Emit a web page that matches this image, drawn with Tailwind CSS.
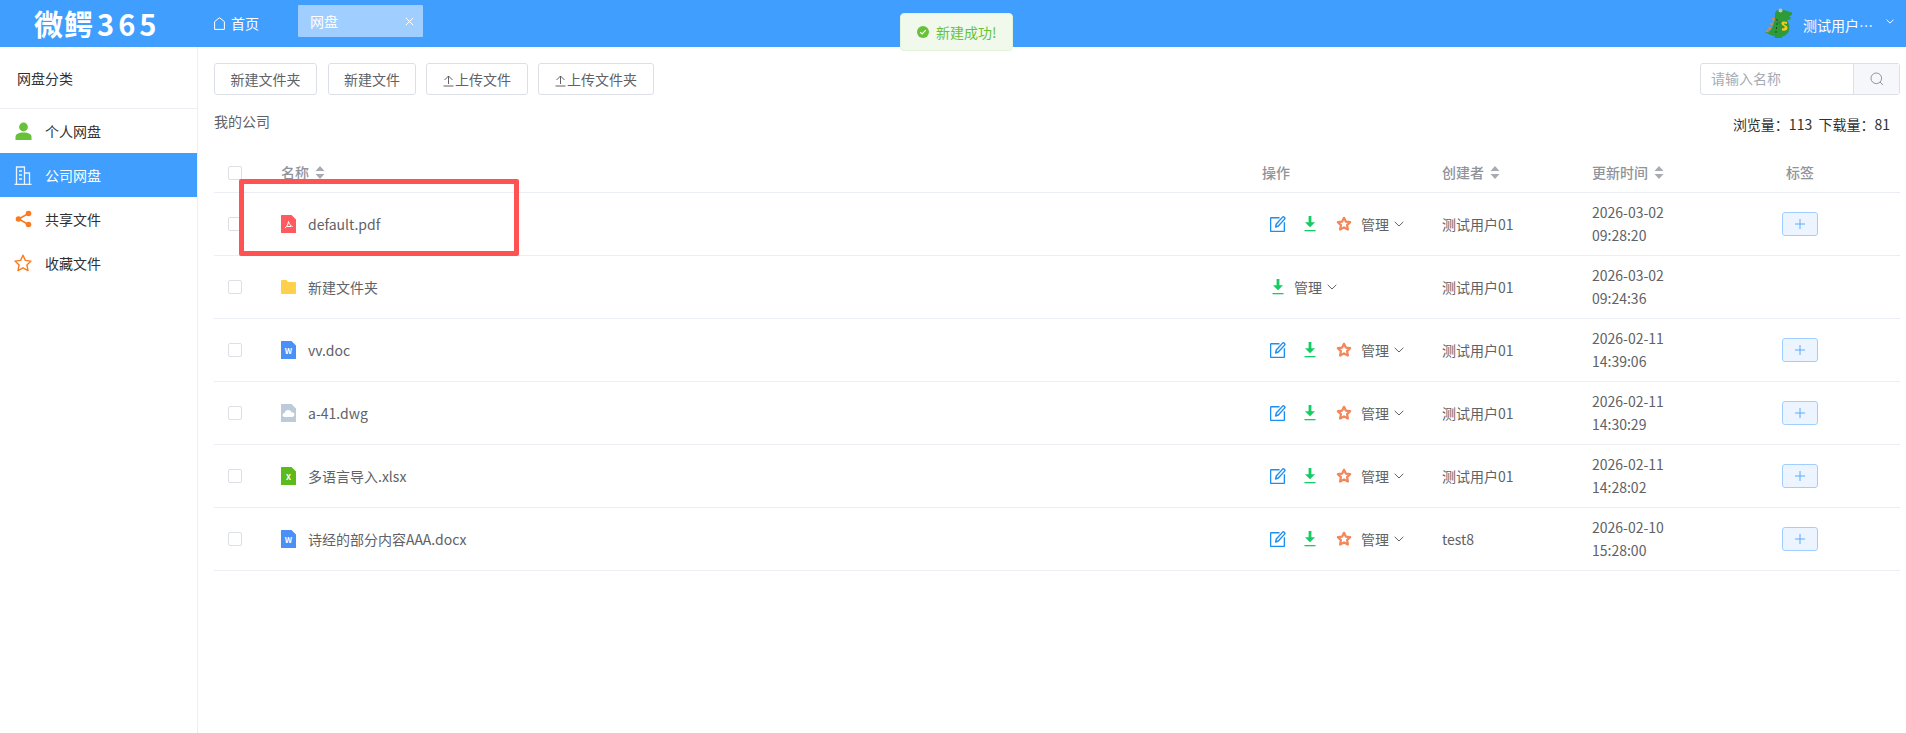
<!DOCTYPE html>
<html lang="zh-CN">
<head>
	<meta charset="UTF-8">
	<meta name="viewport" content="width=device-width, initial-scale=1.0">
	<script src="https://cdn.jsdelivr.net/npm/@tailwindcss/browser@4"></script>
	<title>网盘</title>
</head>
<body class="relative h-[733px] overflow-hidden bg-white font-['Noto_Sans_CJK_SC','Noto_Sans',sans-serif] text-[14px] text-[#606266]">
	<!-- shared icons -->
	<svg class="hidden">
		<symbol id="i-edit" viewBox="0 0 16 16">
			<path d="M9.500 1.700H1.200a.6.6 0 0 0-.6.6v12.500c0 .3.3.6.6.6h12.600c.3 0 .6-.3.6-.6V6.200" fill="none" stroke="#1d8ff0" stroke-width="1.400"/>
			<path d="M5.600 11 6.300 8 12.600 1.100a1 1 0 0 1 1.400 0l.6.6a1 1 0 0 1 0 1.400L8.300 10z" fill="none" stroke="#1d8ff0" stroke-width="1.400" stroke-linejoin="round"/>
		</symbol>
		<symbol id="i-down" viewBox="0 0 12 16">
			<path d="M4.600 0h2.800v6.200H11L6 11.200 1 6.200h3.600z" fill="#14cc63"/>
			<rect x="0.500" y="14" width="11" height="1.300" fill="#14cc63"/>
		</symbol>
		<symbol id="i-star" viewBox="0 0 14 14">
			<path d="M7 1.600 8.600 4.900 12.400 5.400 9.700 8 10.400 11.800 7 10 3.600 11.800 4.300 8 1.600 5.400 5.400 4.900z" fill="none" stroke="#f2875c" stroke-width="2" stroke-linejoin="round"/>
		</symbol>
		<symbol id="i-chev" viewBox="0 0 10 6">
			<path d="M.7.8 5 5 9.300.8" fill="none" stroke="#606266" stroke-width="1"/>
		</symbol>
		<symbol id="i-sort" viewBox="0 0 10 13">
			<path d="M5 0 9.500 5H.5zM5 13 .5 8h9z" fill="#a8abb2"/>
		</symbol>
		<symbol id="i-file" viewBox="0 0 15 18">
			<path d="M0 .5A.5.5 0 0 1 .5 0h10L15 4.500v13a.5.5 0 0 1-.5.5H.5a.5.5 0 0 1-.5-.5z"/>
		</symbol>
	</svg>

	<header class="flex h-[47px] bg-[#409eff] text-white">
		<div class="w-[214px] shrink-0 pl-[34px] text-[29px] leading-[47px] font-bold tracking-[1px]">微鳄<span class="ml-[3px] tracking-[4px]">365</span></div>
		<div class="flex items-center h-[47px] w-[84px] shrink-0 gap-[6px] pb-[1px] text-[14px]">
			<svg class="w-[11px] h-[13px]" viewBox="0 0 11 13"><path d="M.6 4.600 5.500.7l4.900 3.900v7.800H.6z" fill="none" stroke="#fff" stroke-width="1"/></svg>
			<span>首页</span>
		</div>
		<div class="flex items-center justify-between mt-[5px] h-[32px] w-[125px] shrink-0 pl-[12px] pr-[9px] rounded-[1px] bg-[#a0cfff] text-[14px]">
			<span>网盘</span>
			<svg class="w-[9px] h-[9px]" viewBox="0 0 9 9"><path d="M.8.8l7.400 7.400M8.200.8.8 8.200" stroke="#fff" stroke-width="1"/></svg>
		</div>
		<div class="flex items-center ml-auto h-[47px]">
			<svg class="w-[28px] h-[32px] mb-[1px]" viewBox="0 0 28 32">
				<path d="M10 7C10 3 15 1 19 3L27 5.500C28 7 26 9 24 9.500L26 11C25 13 23 13 22 13C25 17 25 24 22 27C20 29 18 30 15 30H17V31H9L10 29C7 29 3 27 0 25C4 25 6 24 7 21C9 17 10 12 10 7Z" fill="#2e9b3a"/>
				<path d="M19 14.500C16.500 14 15.500 17 18 18.500C20 19.500 20.500 21 18 21.500L17 21V23.500C20 24.500 23 23 22.500 20.500C22 18 18.500 18 19 16.500L22 17V15z" fill="#f4c81e"/>
				<path d="M10 11 6.500 11.500 9 15zM8 15.500 4.500 16.500 7.500 19.500zM6.500 20 2.500 20.500 5 23.500zM3.500 23 .5 24 3.500 26z" fill="#ef8a1c"/>
				<circle cx="15.500" cy="3.500" r="2" fill="#b9c9c2"/>
				<path d="M12 12v2M12 16v2M11.500 20v2M11 24v2M14 15v1" stroke="#1f4a25" stroke-width="1"/>
			</svg>
			<span class="ml-[10px] w-[71px] truncate text-[14px] leading-[20px] mb-[-3px]">测试用户01</span>
			<svg class="ml-[12px] mr-[12px] mb-[5px] w-[8px] h-[5px]" viewBox="0 0 10 6"><path d="M.7.8 5 5 9.300.8" fill="none" stroke="#fff" stroke-width="1.200"/></svg>
		</div>
	</header>

	<div class="flex h-[686px]">
		<aside class="w-[198px] shrink-0 border-r border-[#ebeef5]">
			<div class="h-[62px] border-b border-[#ebeef5] pl-[17px] leading-[63px] text-[#303133]">网盘分类</div>
			<nav class="text-[#303133]">
				<a class="flex items-center h-[44px] pl-[15px] gap-[13px]">
					<svg class="w-[17px] h-[18px]" viewBox="0 0 17 18"><circle cx="8.500" cy="5" r="4.400" fill="#67c23a"/><path d="M.5 18v-3c0-3 3-4.500 8-4.500s8 1.500 8 4.500v3z" fill="#67c23a"/></svg>
					<span>个人网盘</span>
				</a>
				<a class="flex items-center h-[44px] pl-[14px] gap-[13px] bg-[#409eff] text-white">
					<svg class="w-[18px] h-[19px]" viewBox="0 0 18 19" fill="none" stroke="#eaf4ff" stroke-width="1.300"><path d="M.5 18.300h17M2.500 18.300V1h8v17.300M10.500 7h5v11.300M5 5h3M5 9h3M5 13h3"/></svg>
					<span>公司网盘</span>
				</a>
				<a class="flex items-center h-[44px] pl-[15px] gap-[13px]">
					<svg class="w-[17px] h-[18px]" viewBox="0 0 17 18"><path d="M13.500 3.500 3.500 9l10 5.500" fill="none" stroke="#f97a1f" stroke-width="1.500"/><circle cx="13.500" cy="3.500" r="2.800" fill="#f97a1f"/><circle cx="3.500" cy="9" r="2.800" fill="#f97a1f"/><circle cx="13.500" cy="14.500" r="2.800" fill="#f97a1f"/></svg>
					<span>共享文件</span>
				</a>
				<a class="flex items-center h-[44px] pl-[14px] gap-[13px]">
					<svg class="w-[18px] h-[18px]" viewBox="0 0 18 18"><path d="M9 1.200 11.400 6.400 17 7.100 12.900 11 14 16.600 9 13.800 4 16.600 5.100 11 1 7.100 6.600 6.400z" fill="none" stroke="#f97a1f" stroke-width="1.400" stroke-linejoin="round"/></svg>
					<span>收藏文件</span>
				</a>
			</nav>
		</aside>

		<main class="flex-1 pl-[16px] pr-[6px]">
			<div class="flex items-center h-[32px] mt-[16px]">
				<button class="w-[103px] h-[32px] border border-[#dcdfe6] rounded-[3px]">新建文件夹</button>
				<button class="w-[88px] h-[32px] ml-[11px] border border-[#dcdfe6] rounded-[3px]">新建文件</button>
				<button class="w-[102px] h-[32px] ml-[10px] border border-[#dcdfe6] rounded-[3px]"><svg class="inline w-[11px] h-[12px] mr-[1px]" viewBox="0 0 11 12"><path d="M1.500 5 5.500 1l4 4M5.500 1v8M.5 11h10" fill="none" stroke="#606266" stroke-width="1"/></svg>上传文件</button>
				<button class="w-[116px] h-[32px] ml-[10px] border border-[#dcdfe6] rounded-[3px]"><svg class="inline w-[11px] h-[12px] mr-[1px]" viewBox="0 0 11 12"><path d="M1.500 5 5.500 1l4 4M5.500 1v8M.5 11h10" fill="none" stroke="#606266" stroke-width="1"/></svg>上传文件夹</button>
				<div class="flex ml-auto w-[200px] h-[32px] border border-[#dcdfe6] rounded-[3px]">
					<span class="flex-1 pl-[10px] leading-[29px] text-[#a8abb2]">请输入名称</span>
					<span class="flex items-center justify-center w-[46px] bg-[#f5f7fa] border-l border-[#dcdfe6]">
						<svg class="w-[14px] h-[14px]" viewBox="0 0 14 14"><circle cx="6.300" cy="6.300" r="5.300" fill="none" stroke="#909399" stroke-width="1"/><path d="M10 10l3 3" stroke="#909399" stroke-width="1"/></svg>
					</span>
				</div>
			</div>
			<div class="flex justify-between h-[20px] mt-[16px] leading-[20px]">
				<span>我的公司</span>
				<span class="mt-[3px] mr-[10px] text-[#303133]">浏览量：113 &nbsp;下载量：81</span>
			</div>

			<section class="mt-[13px]">
				<div class="grid grid-cols-[67px_981px_180px_150px_170px_76px_1fr] h-[49px] border-b border-[#ebeef5] items-center pt-[9px] font-medium text-[#909399]">
					<span class="pl-[14px]"><span class="block w-[14px] h-[14px] border border-[#dcdfe6] rounded-[2px]"></span></span>
					<span class="flex items-center gap-[6px]">名称<svg class="w-[10px] h-[13px]"><use href="#i-sort"/></svg></span>
					<span>操作</span>
					<span class="flex items-center gap-[6px]">创建者<svg class="w-[10px] h-[13px]"><use href="#i-sort"/></svg></span>
					<span class="flex items-center gap-[6px]">更新时间<svg class="w-[10px] h-[13px]"><use href="#i-sort"/></svg></span>
					<span class="text-center">标签</span>
				</div>

				<div class="grid grid-cols-[67px_981px_180px_150px_170px_76px_1fr] h-[63px] border-b border-[#ebeef5] items-center">
					<span class="pl-[14px]"><span class="block w-[14px] h-[14px] border border-[#dcdfe6] rounded-[2px]"></span></span>
					<span class="flex items-center gap-[12px]"><svg class="w-[15px] h-[18px] text-[#ff5a5f] fill-current" viewBox="0 0 15 18"><use href="#i-file"/><path d="M4 13c2-1 3-4 3.500-6.500C8 9 9.500 11 11.500 11.500M6 11.500h4" fill="none" stroke="#fff" stroke-width="1"/></svg>default.pdf</span>
					<span class="flex items-center pl-[8px]">
						<svg class="w-[16px] h-[16px]"><use href="#i-edit"/></svg>
						<svg class="w-[12px] h-[16px] ml-[18px]"><use href="#i-down"/></svg>
						<svg class="w-[16px] h-[16px] ml-[20px]"><use href="#i-star"/></svg>
						<span class="ml-[9px]">管理</span>
						<svg class="w-[10px] h-[6px] ml-[5px]"><use href="#i-chev"/></svg>
					</span>
					<span>测试用户01</span>
					<span class="leading-[23px]">2026-03-02<br>09:28:20</span>
					<span class="flex justify-center"><span class="flex items-center justify-center w-[36px] h-[24px] rounded-[3px] border border-[#a0cfff] bg-[#ecf5ff]"><svg class="w-[10px] h-[10px]" viewBox="0 0 10 10"><path d="M5 0v10M0 5h10" stroke="#5aaaff" stroke-width="1"/></svg></span></span>
				</div>

				<div class="grid grid-cols-[67px_981px_180px_150px_170px_76px_1fr] h-[63px] border-b border-[#ebeef5] items-center">
					<span class="pl-[14px]"><span class="block w-[14px] h-[14px] border border-[#dcdfe6] rounded-[2px]"></span></span>
					<span class="flex items-center gap-[12px]"><svg class="w-[15px] h-[14px]" viewBox="0 0 15 14"><path d="M0 1a1 1 0 0 1 1-1h4.500l1.500 2h7a1 1 0 0 1 1 1v10a1 1 0 0 1-1 1H1a1 1 0 0 1-1-1z" fill="#ffd04b"/></svg>新建文件夹</span>
					<span class="flex items-center pl-[10px]">
						<svg class="w-[12px] h-[16px]"><use href="#i-down"/></svg>
						<span class="ml-[10px]">管理</span>
						<svg class="w-[10px] h-[6px] ml-[5px]"><use href="#i-chev"/></svg>
					</span>
					<span>测试用户01</span>
					<span class="leading-[23px]">2026-03-02<br>09:24:36</span>
					<span></span>
				</div>

				<div class="grid grid-cols-[67px_981px_180px_150px_170px_76px_1fr] h-[63px] border-b border-[#ebeef5] items-center">
					<span class="pl-[14px]"><span class="block w-[14px] h-[14px] border border-[#dcdfe6] rounded-[2px]"></span></span>
					<span class="flex items-center gap-[12px]"><svg class="w-[15px] h-[18px] text-[#4a90f7] fill-current" viewBox="0 0 15 18"><use href="#i-file"/><text x="7.500" y="13" font-size="8" font-weight="700" text-anchor="middle" fill="#fff">W</text></svg>vv.doc</span>
					<span class="flex items-center pl-[8px]">
						<svg class="w-[16px] h-[16px]"><use href="#i-edit"/></svg>
						<svg class="w-[12px] h-[16px] ml-[18px]"><use href="#i-down"/></svg>
						<svg class="w-[16px] h-[16px] ml-[20px]"><use href="#i-star"/></svg>
						<span class="ml-[9px]">管理</span>
						<svg class="w-[10px] h-[6px] ml-[5px]"><use href="#i-chev"/></svg>
					</span>
					<span>测试用户01</span>
					<span class="leading-[23px]">2026-02-11<br>14:39:06</span>
					<span class="flex justify-center"><span class="flex items-center justify-center w-[36px] h-[24px] rounded-[3px] border border-[#a0cfff] bg-[#ecf5ff]"><svg class="w-[10px] h-[10px]" viewBox="0 0 10 10"><path d="M5 0v10M0 5h10" stroke="#5aaaff" stroke-width="1"/></svg></span></span>
				</div>

				<div class="grid grid-cols-[67px_981px_180px_150px_170px_76px_1fr] h-[63px] border-b border-[#ebeef5] items-center">
					<span class="pl-[14px]"><span class="block w-[14px] h-[14px] border border-[#dcdfe6] rounded-[2px]"></span></span>
					<span class="flex items-center gap-[12px]"><svg class="w-[15px] h-[18px] text-[#bccbd9] fill-current" viewBox="0 0 15 18"><use href="#i-file"/><path d="M3.500 13a2 2 0 0 1 0-4 3.800 3.800 0 0 1 7.200-.6A2.300 2.300 0 0 1 11.500 13z" fill="#fff"/></svg>a-41.dwg</span>
					<span class="flex items-center pl-[8px]">
						<svg class="w-[16px] h-[16px]"><use href="#i-edit"/></svg>
						<svg class="w-[12px] h-[16px] ml-[18px]"><use href="#i-down"/></svg>
						<svg class="w-[16px] h-[16px] ml-[20px]"><use href="#i-star"/></svg>
						<span class="ml-[9px]">管理</span>
						<svg class="w-[10px] h-[6px] ml-[5px]"><use href="#i-chev"/></svg>
					</span>
					<span>测试用户01</span>
					<span class="leading-[23px]">2026-02-11<br>14:30:29</span>
					<span class="flex justify-center"><span class="flex items-center justify-center w-[36px] h-[24px] rounded-[3px] border border-[#a0cfff] bg-[#ecf5ff]"><svg class="w-[10px] h-[10px]" viewBox="0 0 10 10"><path d="M5 0v10M0 5h10" stroke="#5aaaff" stroke-width="1"/></svg></span></span>
				</div>

				<div class="grid grid-cols-[67px_981px_180px_150px_170px_76px_1fr] h-[63px] border-b border-[#ebeef5] items-center">
					<span class="pl-[14px]"><span class="block w-[14px] h-[14px] border border-[#dcdfe6] rounded-[2px]"></span></span>
					<span class="flex items-center gap-[12px]"><svg class="w-[15px] h-[18px] text-[#5cba1a] fill-current" viewBox="0 0 15 18"><use href="#i-file"/><text x="7.500" y="13" font-size="8" font-weight="700" text-anchor="middle" fill="#fff">X</text></svg>多语言导入.xlsx</span>
					<span class="flex items-center pl-[8px]">
						<svg class="w-[16px] h-[16px]"><use href="#i-edit"/></svg>
						<svg class="w-[12px] h-[16px] ml-[18px]"><use href="#i-down"/></svg>
						<svg class="w-[16px] h-[16px] ml-[20px]"><use href="#i-star"/></svg>
						<span class="ml-[9px]">管理</span>
						<svg class="w-[10px] h-[6px] ml-[5px]"><use href="#i-chev"/></svg>
					</span>
					<span>测试用户01</span>
					<span class="leading-[23px]">2026-02-11<br>14:28:02</span>
					<span class="flex justify-center"><span class="flex items-center justify-center w-[36px] h-[24px] rounded-[3px] border border-[#a0cfff] bg-[#ecf5ff]"><svg class="w-[10px] h-[10px]" viewBox="0 0 10 10"><path d="M5 0v10M0 5h10" stroke="#5aaaff" stroke-width="1"/></svg></span></span>
				</div>

				<div class="grid grid-cols-[67px_981px_180px_150px_170px_76px_1fr] h-[63px] border-b border-[#ebeef5] items-center">
					<span class="pl-[14px]"><span class="block w-[14px] h-[14px] border border-[#dcdfe6] rounded-[2px]"></span></span>
					<span class="flex items-center gap-[12px]"><svg class="w-[15px] h-[18px] text-[#4a90f7] fill-current" viewBox="0 0 15 18"><use href="#i-file"/><text x="7.500" y="13" font-size="8" font-weight="700" text-anchor="middle" fill="#fff">W</text></svg>诗经的部分内容AAA.docx</span>
					<span class="flex items-center pl-[8px]">
						<svg class="w-[16px] h-[16px]"><use href="#i-edit"/></svg>
						<svg class="w-[12px] h-[16px] ml-[18px]"><use href="#i-down"/></svg>
						<svg class="w-[16px] h-[16px] ml-[20px]"><use href="#i-star"/></svg>
						<span class="ml-[9px]">管理</span>
						<svg class="w-[10px] h-[6px] ml-[5px]"><use href="#i-chev"/></svg>
					</span>
					<span>test8</span>
					<span class="leading-[23px]">2026-02-10<br>15:28:00</span>
					<span class="flex justify-center"><span class="flex items-center justify-center w-[36px] h-[24px] rounded-[3px] border border-[#a0cfff] bg-[#ecf5ff]"><svg class="w-[10px] h-[10px]" viewBox="0 0 10 10"><path d="M5 0v10M0 5h10" stroke="#5aaaff" stroke-width="1"/></svg></span></span>
				</div>
			</section>
		</main>
	</div>

	<!-- toast and the red annotation sit over the page -->
	<div class="absolute left-[900px] top-[13px] flex items-center gap-[7px] w-[113px] h-[38px] pl-[16px] rounded-[4px] border border-[#e1f3d8] bg-[#f0f9eb] text-[#67c23a]">
		<svg class="w-[12px] h-[12px]" viewBox="0 0 12 12"><circle cx="6" cy="6" r="6" fill="#67c23a"/><path d="M3.200 6.200 5.200 8 8.800 4.200" fill="none" stroke="#fff" stroke-width="1.200"/></svg>
		<span>新建成功!</span>
	</div>
	<div class="absolute left-[239px] top-[179px] w-[280px] h-[77px] border-[5px] border-[#ff5353] rounded-[2px]"></div>
</body>
</html>
